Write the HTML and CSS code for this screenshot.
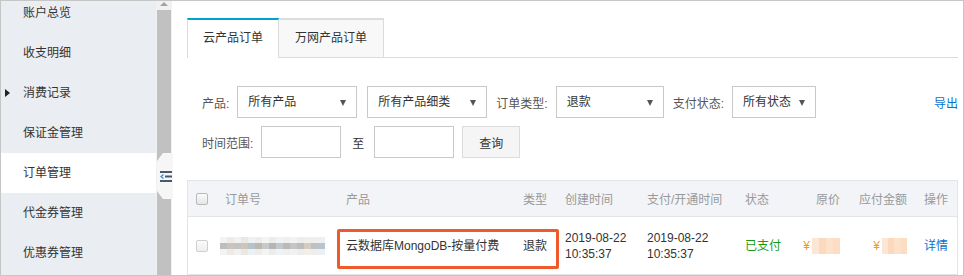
FILE: index.html
```html
<!DOCTYPE html>
<html lang="zh-CN">
<head>
    <meta charset="UTF-8">
    <meta name="viewport" content="width=device-width, initial-scale=1.0">
    <title>订单管理</title>
    <link rel="stylesheet" href="styles.css">
</head>
<body>
    <div class="frame">
        <aside class="sidebar">
            <ul class="menu">
                <li class="menu-item">账户总览</li>
                <li class="menu-item">收支明细</li>
                <li class="menu-item has-sub">消费记录</li>
                <li class="menu-item">保证金管理</li>
                <li class="menu-item active">订单管理</li>
                <li class="menu-item">代金券管理</li>
                <li class="menu-item">优惠券管理</li>
            </ul>
        </aside>

        <div class="scrollbar">
            <div class="scroll-up"></div>
            <div class="scroll-thumb"></div>
            <div class="collapse-handle">
                <svg width="12" height="11" viewBox="0 0 12 11">
                    <rect x="0" y="0" width="12" height="2" fill="#4b596b"/>
                    <rect x="5" y="4.5" width="7" height="2" fill="#4b596b"/>
                    <rect x="0" y="9" width="12" height="2" fill="#4b596b"/>
                    <path d="M3.5 3.5 L1 5.5 L3.5 7.5" fill="none" stroke="#3d8fd8" stroke-width="1.4"/>
                </svg>
            </div>
        </div>

        <main class="content">
            <div class="tabs">
                <div class="tab active">云产品订单</div>
                <div class="tab">万网产品订单</div>
            </div>

            <div class="filters">
                <div class="filter-row">
                    <span class="label">产品:</span>
                    <div class="select w-120">所有产品</div>
                    <div class="select w-120 ml">所有产品细类</div>
                    <span class="label ml">订单类型:</span>
                    <div class="select w-107">退款</div>
                    <span class="label ml">支付状态:</span>
                    <div class="select w-84">所有状态</div>
                    <a class="export" href="#">导出</a>
                </div>
                <div class="filter-row">
                    <span class="label">时间范围:</span>
                    <div class="input"></div>
                    <span class="to">至</span>
                    <div class="input"></div>
                    <button class="btn">查询</button>
                </div>
            </div>

            <div class="table">
                <div class="tr thead">
                    <div class="td"><span class="check"></span></div>
                    <div class="td">订单号</div>
                    <div class="td">产品</div>
                    <div class="td">类型</div>
                    <div class="td">创建时间</div>
                    <div class="td">支付/开通时间</div>
                    <div class="td">状态</div>
                    <div class="td right">原价</div>
                    <div class="td right">应付金额</div>
                    <div class="td">操作</div>
                </div>
                <div class="tr tbody">
                    <div class="td"><span class="check"></span></div>
                    <div class="td"><span class="mosaic"></span></div>
                    <div class="td">云数据库MongoDB-按量付费</div>
                    <div class="td">退款</div>
                    <div class="td">2019-08-22<br>10:35:37</div>
                    <div class="td">2019-08-22<br>10:35:37</div>
                    <div class="td paid">已支付</div>
                    <div class="td right"><span class="yen">¥</span><span class="price-blur w-28"></span></div>
                    <div class="td right"><span class="yen">¥</span><span class="price-blur w-25"></span></div>
                    <div class="td"><a class="link" href="#">详情</a></div>
                </div>
                <div class="highlight"></div>
            </div>
        </main>
    </div>
</body>
</html>
```

FILE: styles.css
```css
:root {
    --border: #dcdcdc;
    --teal: #00a2ca;
    --blue: #0a70d0;
}

* {
    box-sizing: border-box;
}

body {
    margin: 0;
    font-family: "Liberation Sans", "Noto Sans CJK SC", sans-serif;
    font-size: 12px;
    color: #333;
    background: #fff;
}

.frame {
    width: 964px;
    height: 276px;
    border: 1px solid #c6c6c6;
    display: flex;
    overflow: hidden;
}

/* sidebar */
.sidebar {
    width: 155px;
    flex: none;
    background: #eaedf1;
}

.menu {
    list-style: none;
    margin: -8px 0 0;
    padding: 0;
}

.menu-item {
    height: 40px;
    line-height: 40px;
    padding-left: 22px;
    position: relative;
    color: #333;
}

.menu-item.active {
    background: #fff;
}

.menu-item.has-sub::before {
    content: "";
    position: absolute;
    left: 4px;
    top: 16px;
    border-left: 5px solid #222;
    border-top: 4px solid transparent;
    border-bottom: 4px solid transparent;
}

/* scrollbar column */
.scrollbar {
    width: 16px;
    flex: none;
    background: #f1f1f1;
    position: relative;
    padding: 9px 1px 0 1px;
}

.scroll-up {
    position: absolute;
    top: 1px;
    left: 4px;
    border-bottom: 4px solid #a3a3a3;
    border-left: 4px solid transparent;
    border-right: 4px solid transparent;
}

.scroll-thumb {
    height: 100%;
    background: #c1c1c1;
}

.collapse-handle {
    position: absolute;
    top: 152px;
    left: 1px;
    width: 16px;
    height: 46px;
    background: #f6f6f6;
    clip-path: polygon(6px 0, 100% 0, 100% 100%, 6px 100%, 0 38px, 0 8px);
    display: flex;
    align-items: center;
    justify-content: flex-end;
    padding-right: 1px;
}

/* content */
.content {
    flex: 1;
    background: #fff;
    padding: 17px 5px 0 15px;
}

.tabs {
    display: flex;
    border-bottom: 1px solid var(--border);
    height: 40px;
}

.tab {
    flex: none;
    white-space: nowrap;
    height: 39px;
    line-height: 37px;
    padding: 0 16px;
    border-top: 2px solid var(--border);
    border-right: 1px solid var(--border);
    background: #f8f8f8;
    color: #333;
}

.tab.active {
    border-top-color: var(--teal);
    border-left: 1px solid var(--border);
    background: #fff;
    height: 40px;
    padding: 0 15px;
}

.filters {
    margin-top: 28px;
    display: flex;
    flex-direction: column;
    gap: 8px;
}

.filter-row {
    display: flex;
    align-items: center;
    height: 32px;
    padding-left: 15px;
}

.label {
    color: #555;
    margin-right: 8px;
}

.ml {
    margin-left: 10px;
}

.label.ml {
    margin-left: 9px;
}

.select {
    height: 32px;
    line-height: 30px;
    border: 1px solid #c9c9c9;
    padding-left: 10px;
    position: relative;
    color: #333;
}

.select::after {
    content: "";
    position: absolute;
    right: 10px;
    top: 13px;
    border-top: 6px solid #555;
    border-left: 3px solid transparent;
    border-right: 3px solid transparent;
}

.w-120 { width: 120px; }
.w-107 { width: 108px; }
.w-84 { width: 84px; }

.export {
    margin-left: auto;
    color: var(--blue);
    text-decoration: none;
}

.input {
    width: 80px;
    height: 32px;
    border: 1px solid #c9c9c9;
}

.to {
    margin: 0 10px 0 11px;
}

.btn {
    margin-left: 8px;
    width: 58px;
    height: 32px;
    border: 1px solid #dcdcdc;
    background: #f5f5f5;
    font: inherit;
    color: #333;
    padding: 0;
}

/* table */
.table {
    margin-top: 22px;
    border: 1px solid #e2e4e8;
    position: relative;
}

.tr {
    display: grid;
    grid-template-columns: 29px 121px 177px 42px 82px 98px 63px 46px 67px 44px;
    align-items: center;
}

.thead {
    height: 36px;
    background: #f3f4f8;
    border-bottom: 1px solid #e2e4e8;
    color: #999;
}

.tbody {
    height: 57px;
    line-height: 16px;
}

.td {
    padding-left: 8px;
    white-space: nowrap;
}

.td:first-child {
    padding-left: 8px;
    display: flex;
}

.td:last-child {
    padding-left: 11px;
}

.td.right {
    text-align: right;
    padding-left: 0;
    padding-right: 6px;
}

.check {
    width: 12px;
    height: 12px;
    border: 1px solid #b9b9b9;
    border-radius: 2px;
    background: linear-gradient(#fafafa, #e6e6e6);
}

.tbody .check {
    border-color: #cfcfcf;
    background: linear-gradient(#fbfbfb, #eeeeee);
}

.mosaic {
    display: block;
    width: 105px;
    height: 18px;
    margin-left: -5px;
    background:
        linear-gradient(90deg, #bdbdbd 0 7px, #ccc4bc 7px 14px, #c3c3c3 14px 21px, #cec4b8 21px 28px,
            #b8c2ca 28px 35px, #bdb7b2 35px 42px, #c9c9c9 42px 49px, #b5b5b5 49px 56px,
            #c2c8cc 56px 63px, #b9b9b9 63px 70px, #c5c5c5 70px 77px, #bcbcbc 77px 84px,
            #d2ccc4 84px 91px, #c0c0c0 91px 98px, #b8c3cc 98px 105px) 0 6px / 105px 6px no-repeat,
        linear-gradient(90deg, #f3f3f3 0 7px, #eeeae6 7px 14px, #f1f1f1 14px 21px, #ebe7e2 21px 28px,
            #eef1f3 28px 35px, #ededed 35px 42px, #f4f4f4 42px 49px, #ececec 49px 56px,
            #f0f2f3 56px 63px, #efefef 63px 70px, #f2f2f2 70px 77px, #ededed 77px 84px,
            #f2efeb 84px 91px, #eeeeee 91px 98px, #ecf0f2 98px 105px);
}

.paid {
    color: #1a9a12;
}

.yen {
    color: #f39a1e;
    margin-right: 2px;
    vertical-align: middle;
}

.price-blur {
    display: inline-block;
    height: 16px;
    vertical-align: middle;
    background: linear-gradient(90deg, #fde6d3 0 25%, #fcd9bd 25% 50%, #fde2cb 50% 75%, #fcdcc2 75%);
}

.w-28 { width: 28px; }
.w-25 { width: 25px; }

.link {
    color: var(--blue);
    text-decoration: none;
}

.highlight {
    position: absolute;
    left: 149px;
    top: 48px;
    width: 222px;
    height: 40px;
    border: 3px solid #ef5a2d;
    border-radius: 2px;
    pointer-events: none;
}
```
